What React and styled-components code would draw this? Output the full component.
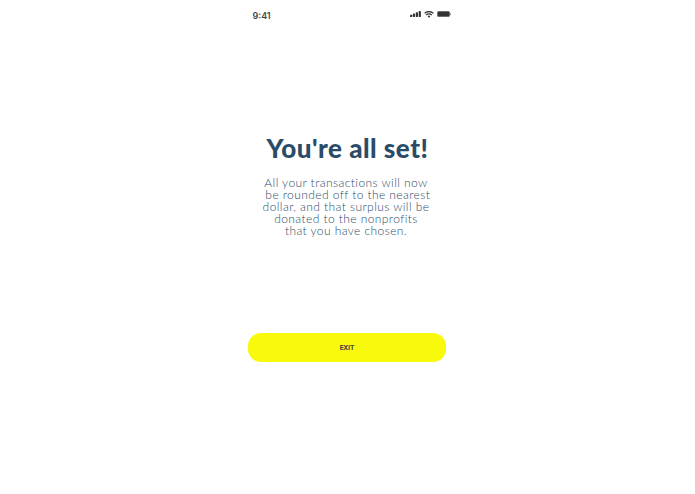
import React from 'react';
import styled, { createGlobalStyle } from 'styled-components';

const GlobalStyle = createGlobalStyle`
  html, body { margin: 0; padding: 0; background: #fff; }
  body { font-family: "Lato", sans-serif; }
`;

export default function App() {
  return (
    <Page>
      <GlobalStyle />
      <Phone>
        <StatusBar>
          <Clock>9:41</Clock>
          <StatusIcons>
            <svg width="11" height="6" viewBox="0 0 11 6">
              <rect x="0" y="3.8" width="2.2" height="2.2" rx="0.4" fill="#333" />
              <rect x="2.9" y="2.6" width="2.2" height="3.4" rx="0.4" fill="#333" />
              <rect x="5.8" y="1.3" width="2.2" height="4.7" rx="0.4" fill="#333" />
              <rect x="8.7" y="0" width="2.2" height="6" rx="0.4" fill="#333" />
            </svg>
            <svg width="10" height="7" viewBox="0 0 10 7">
              <path d="M0.6 2.4 A6.2 6.2 0 0 1 9.4 2.4" fill="none" stroke="#333" strokeWidth="1.2" />
              <path d="M2.2 4 A3.9 3.9 0 0 1 7.8 4" fill="none" stroke="#333" strokeWidth="1.2" />
              <path d="M3.7 5.4 L5 4.3 L6.3 5.4 L5 6.8 Z" fill="#333" />
            </svg>
            <svg width="14" height="6" viewBox="0 0 14 6">
              <rect x="0.3" y="0.3" width="12.4" height="5.4" rx="1.5" fill="#333" stroke="#777" strokeWidth="0.5" />
              <rect x="13" y="2" width="1" height="2" rx="0.4" fill="#777" />
            </svg>
          </StatusIcons>
        </StatusBar>
        <Message>
          <Title>You're all set!</Title>
          <Body>
            All your transactions will now
            <br />
            &nbsp;be rounded off to the nearest
            <br />
            dollar, and that surplus will be
            <br />
            donated to the nonprofits
            <br />
            that you have chosen.
          </Body>
        </Message>
        <ExitButton>EXIT</ExitButton>
      </Phone>
    </Page>
  );
}

const Page = styled.div`
  width: 695px;
  height: 494px;
  display: flex;
  justify-content: center;
  overflow: hidden;
  background: #fff;
`;

const Phone = styled.div`
  width: 208px;
  display: flex;
  flex-direction: column;
  align-items: center;
`;

const StatusBar = styled.div`
  width: 100%;
  box-sizing: border-box;
  height: 30px;
  padding: 0 1px 0 9px;
  display: flex;
  align-items: center;
  justify-content: space-between;
`;

const Clock = styled.span`
  font-family: "Inter", sans-serif;
  font-size: 9px;
  font-weight: 600;
  color: #444;
`;

const StatusIcons = styled.div`
  display: flex;
  align-items: center;
  gap: 3px;
  margin-top: -2px;
`;

const Message = styled.div`
  margin-top: 103px;
  display: flex;
  flex-direction: column;
  align-items: center;
`;

const Title = styled.h1`
  margin: 0;
  font-family: "Lato", sans-serif;
  font-size: 26px;
  line-height: 30px;
  font-weight: 900;
  letter-spacing: 0.5px;
  color: #2b4c68;
  white-space: nowrap;
`;

const Body = styled.p`
  margin: 14px 3px 0 0;
  font-family: "Lato", sans-serif;
  font-size: 12px;
  line-height: 12px;
  font-weight: 300;
  letter-spacing: 0.42px;
  color: #2f4d68;
  text-align: center;
  white-space: nowrap;
`;

const ExitButton = styled.button`
  margin: 96px 1px 0 0;
  width: 198px;
  height: 29px;
  border: 0;
  border-radius: 13px;
  background: #f8f90b;
  font-family: "Roboto", sans-serif;
  font-size: 7px;
  font-weight: 700;
  color: #444;
  padding: 0;
`;
